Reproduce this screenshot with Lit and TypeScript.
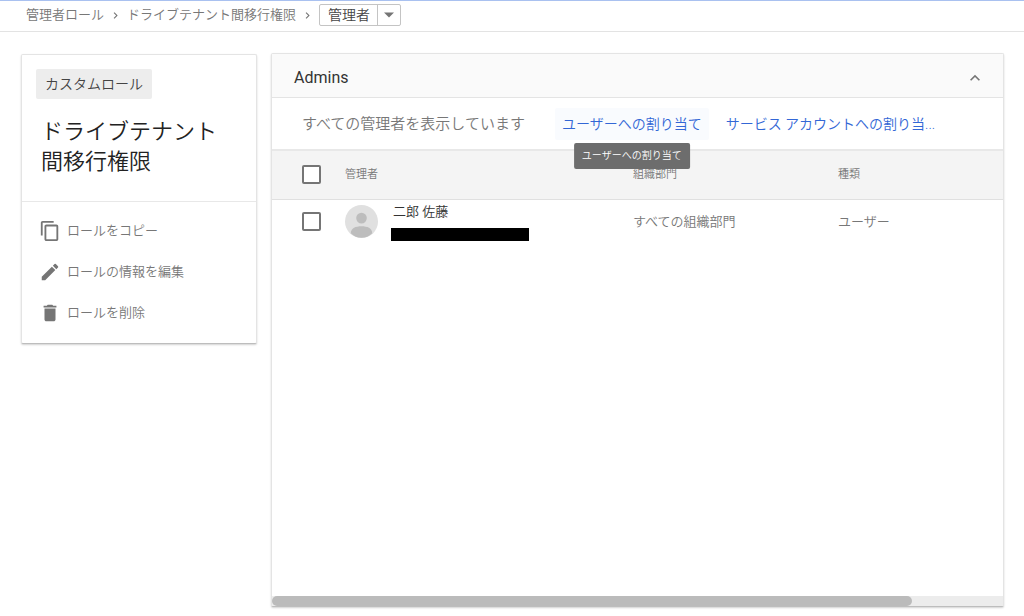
import { LitElement, html, css, svg } from "lit";
import { customElement, state } from "lit/decorators.js";

const icons = {
  copy: svg`<path d="M16 1H4c-1.1 0-2 .9-2 2v14h2V3h12V1zm3 4H8c-1.1 0-2 .9-2 2v14c0 1.1.9 2 2 2h11c1.100 0 2-.9 2-2V7c0-1.100-.9-2-2-2zm0 16H8V7h11v14z"/>`,
  edit: svg`<path d="M3 17.250V21h3.750L17.810 9.940l-3.750-3.750L3 17.250zM20.710 7.040a1 1 0 0 0 0-1.410l-2.340-2.340a1 1 0 0 0-1.410 0l-1.830 1.830 3.750 3.750 1.830-1.830z"/>`,
  remove: svg`<path d="M6 19c0 1.100.9 2 2 2h8c1.100 0 2-.9 2-2V7H6v12zM19 4h-3.500l-1-1h-5l-1 1H5v2h14V4z"/>`,
  up: svg`<path d="M12 8l-6 6 1.410 1.410L12 10.830l4.590 4.580L18 14z"/>`,
  down: svg`<path d="M6 9l6 6 6-6z"/>`,
  next: svg`<path d="M10 6L8.590 7.410 13.170 12l-4.580 4.590L10 18l6-6z"/>`,
};

const icon = (shape: unknown, size: string) =>
  html`<svg class="icon ${size}" viewBox="0 0 24 24" aria-hidden="true">${shape}</svg>`;

const actions = [
  { shape: icons.copy, label: "ロールをコピー" },
  { shape: icons.edit, label: "ロールの情報を編集" },
  { shape: icons.remove, label: "ロールを削除" },
];

const admins = [{ name: "二郎 佐藤", unit: "すべての組織部門", kind: "ユーザー" }];

@customElement("app-root")
export class AppRoot extends LitElement {
  @state() private open = true;

  static styles = css`
    :host {
      display: flex;
      flex-direction: column;
      min-height: 100vh;
      box-sizing: border-box;
      background: #fff;
      color: #777;
      font: 350 13px/20px Roboto, "Noto Sans CJK JP", sans-serif;
    }
    *,
    *::before,
    *::after {
      box-sizing: border-box;
    }
    button {
      font: inherit;
      color: inherit;
      border: 0;
      background: none;
      padding: 0;
      cursor: pointer;
    }
    a {
      color: inherit;
      text-decoration: none;
    }
    .icon {
      display: block;
      flex: none;
      fill: #757575;
    }
    .small {
      width: 13px;
      height: 13px;
    }
    .chevron {
      width: 20px;
      height: 20px;
    }
    .medium {
      width: 22px;
      height: 22px;
    }
    .crumbs {
      display: flex;
      align-items: center;
      gap: 5px;
      height: 32px;
      padding: 0 26px 2px;
      border-top: 1px solid #a9c1f0;
      border-bottom: 1px solid #e3e3e3;
    }
    .split {
      display: flex;
      height: 22px;
      border: 1px solid #c4c4c4;
      border-radius: 2px;
      color: #444;
      font-size: 14px;
    }
    .current {
      padding: 0 7px 0 8px;
    }
    .more {
      display: grid;
      place-items: center;
      width: 23px;
      border-left: 1px solid #c4c4c4;
    }
    main {
      flex: 1;
      display: flex;
      align-items: flex-start;
      gap: 14px;
      padding: 21px 20px 9px 21px;
    }
    .card {
      border: 1px solid #e4e4e4;
      border-bottom-color: #bdbdbd;
      border-radius: 2px;
      background: #fff;
      box-shadow: 0 1px 2px rgba(0, 0, 0, 0.18);
    }
    .side {
      flex: 0 0 236px;
      margin-top: 1px;
    }
    .summary {
      height: 147px;
      padding: 14px;
      border-bottom: 1px solid #e8e8e8;
    }
    .tag {
      display: inline-block;
      padding: 5px 9px;
      border-radius: 2px;
      background: #ededed;
      color: #444;
      font-size: 14px;
    }
    h1 {
      margin: 18px 20px 0 5px;
      color: #222;
      font-size: 22px;
      line-height: 30px;
      font-weight: 350;
    }
    .actions {
      list-style: none;
      margin: 0;
      padding: 8px 17px 10px;
    }
    .action {
      display: flex;
      align-items: center;
      gap: 6px;
      height: 41px;
    }
    .panel {
      flex: 1;
      min-width: 0;
      align-self: stretch;
      display: flex;
      flex-direction: column;
    }
    .head {
      display: flex;
      align-items: center;
      justify-content: space-between;
      height: 44px;
      padding: 4px 18px 0 22px;
      border-bottom: 1px solid #e4e4e4;
      background: #fafafa;
    }
    h2 {
      margin: 0;
      color: #333;
      font-size: 16px;
      line-height: 24px;
      font-weight: 400;
    }
    .tools {
      display: flex;
      align-items: center;
      height: 53px;
      padding: 0 30px;
      border-bottom: 2px solid #e8e8e8;
      white-space: nowrap;
    }
    .filter {
      flex: none;
      margin-right: 30px;
      font-size: 15px;
    }
    .hint {
      position: relative;
      flex: none;
      margin-right: 10px;
    }
    .assign {
      height: 32px;
      padding: 0 7px;
      border-radius: 2px;
      color: #3367d6;
      font-size: 14px;
    }
    .hover {
      background: #f9fbfe;
    }
    .tip {
      position: absolute;
      z-index: 1;
      top: 35px;
      left: 50%;
      transform: translateX(-50%);
      padding: 3px 8px;
      border-radius: 2px;
      background: #6d6d6d;
      color: #fff;
      font-size: 10px;
    }
    table {
      width: 100%;
      table-layout: fixed;
      border-collapse: collapse;
    }
    .pick {
      width: 73px;
    }
    .who {
      width: 288px;
    }
    .unit {
      width: 205px;
    }
    th,
    td {
      padding: 0;
      text-align: left;
      font-weight: 350;
    }
    th {
      height: 48px;
      border-bottom: 1px solid #e0e0e0;
      background: #f4f4f4;
      font-size: 11px;
    }
    td {
      height: 45px;
    }
    .box {
      display: block;
      appearance: none;
      width: 19px;
      height: 19px;
      margin: 0 0 0 30px;
      border: 2px solid #757575;
      border-radius: 2px;
      background: #fff;
    }
    .box:checked {
      background: #757575;
    }
    .person {
      display: flex;
      align-items: center;
      gap: 13px;
    }
    .avatar {
      display: block;
      width: 33px;
      height: 33px;
    }
    .ident {
      display: flex;
      flex-direction: column;
      gap: 6px;
      color: #333;
    }
    .name {
      padding-left: 2px;
    }
    .redacted {
      width: 138px;
      height: 13px;
      background: #000;
    }
    .track {
      height: 10px;
      margin-top: auto;
      background: #ececec;
    }
    .thumb {
      width: 87.6%;
      height: 10px;
      border-radius: 5px;
      background: #bbb;
    }
  `;

  render() {
    return html`
      <nav class="crumbs" aria-label="パンくずリスト">
        <a href="#roles">管理者ロール</a>
        ${icon(icons.next, "small")}
        <a href="#role">ドライブテナント間移行権限</a>
        ${icon(icons.next, "small")}
        <div class="split">
          <button class="current">管理者</button>
          <button class="more" aria-label="メニューを開く">${icon(icons.down, "chevron")}</button>
        </div>
      </nav>
      <main>
        <aside class="card side">
          <div class="summary">
            <span class="tag">カスタムロール</span>
            <h1>ドライブテナント間移行権限</h1>
          </div>
          <ul class="actions">
            ${actions.map(
              (a) => html`<li><button class="action">${icon(a.shape, "medium")}<span>${a.label}</span></button></li>`
            )}
          </ul>
        </aside>
        <section class="card panel">
          <header class="head">
            <h2>Admins</h2>
            <button aria-label="折りたたむ" aria-expanded=${this.open} @click=${() => (this.open = !this.open)}>
              ${icon(icons.up, "chevron")}
            </button>
          </header>
          ${this.open ? this.renderList() : null}
        </section>
      </main>
    `;
  }

  private renderList() {
    return html`
      <div class="tools">
        <span class="filter">すべての管理者を表示しています</span>
        <div class="hint">
          <button class="assign hover" aria-describedby="tip">ユーザーへの割り当て</button>
          <span class="tip" id="tip" role="tooltip">ユーザーへの割り当て</span>
        </div>
        <button class="assign">サービス アカウントへの割り当...</button>
      </div>
      <table>
        <thead>
          <tr>
            <th class="pick"><input class="box" type="checkbox" aria-label="すべて選択" /></th>
            <th class="who">管理者</th>
            <th class="unit">組織部門</th>
            <th>種類</th>
          </tr>
        </thead>
        <tbody>
          ${admins.map(
            (a) => html`<tr>
              <td><input class="box" type="checkbox" aria-label=${a.name} /></td>
              <td>
                <div class="person">
                  <svg class="avatar" viewBox="0 0 34 34" aria-hidden="true">
                    <circle cx="17" cy="17" r="17" fill="#e0e0e0" />
                    <circle cx="17" cy="13.500" r="5.500" fill="#bdbdbd" />
                    <path d="M6 29C6 24 11 22 17 22s11 2 11 7c-3 3-7 4.800-11 4.800S9 32 6 29z" fill="#bdbdbd" />
                  </svg>
                  <div class="ident">
                    <span class="name">${a.name}</span>
                    <span class="redacted"></span>
                  </div>
                </div>
              </td>
              <td>${a.unit}</td>
              <td>${a.kind}</td>
            </tr>`
          )}
        </tbody>
      </table>
      <div class="track"><div class="thumb"></div></div>
    `;
  }
}
